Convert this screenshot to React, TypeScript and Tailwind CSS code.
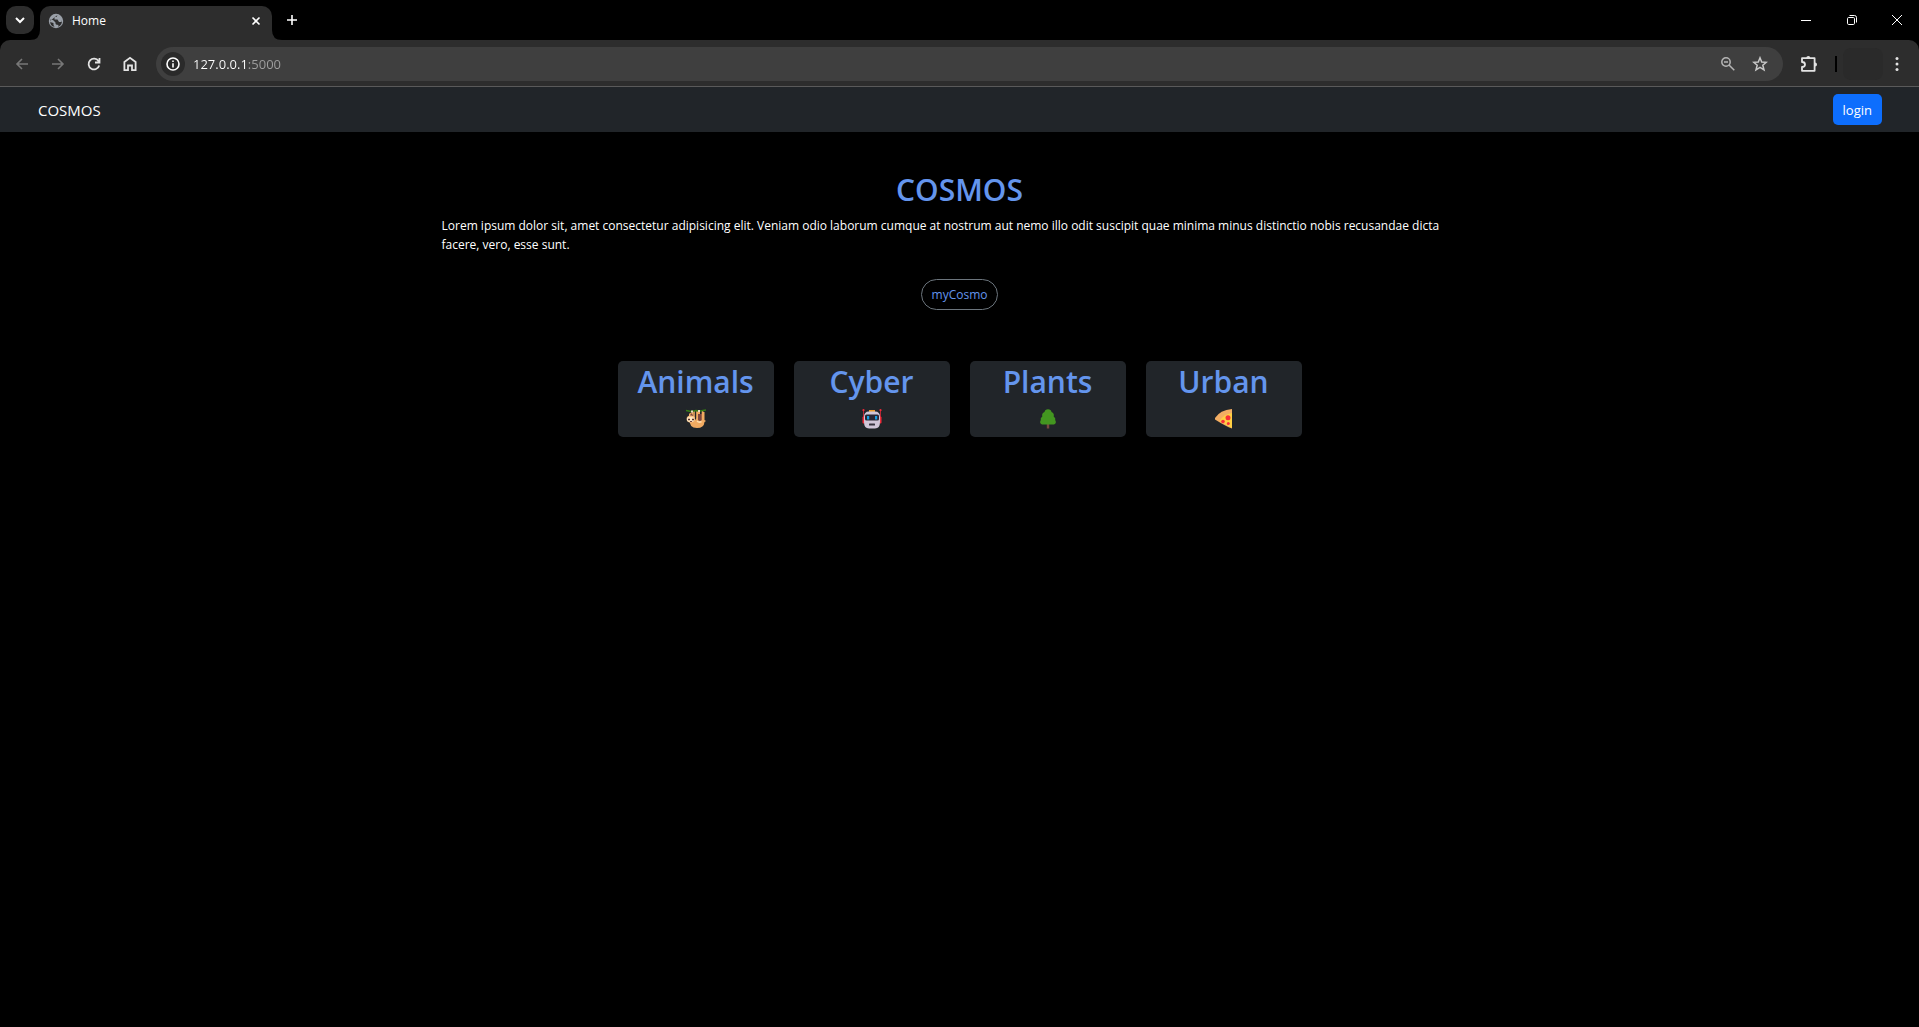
import React from "react";

function Sloth() {
  return (
    <svg viewBox="0 0 20 20" className="size-5" aria-hidden="true">
      <path d="M3 5V9Q3 19 11 19Q18 19 18.500 13L20 12L18.500 11V3H16V11H14V3H11V9L9 11L7 8V3L4 4Z" fill="#f2ab62" />
      <path d="M5 4Q8 6 9 10L7 8L4 7ZM12 5H16V11Q14 13 12 11Z" fill="#7b463e" />
      <path d="M8 2V9M11 2V11M16.500 2V12" stroke="#f2ab62" strokeWidth="1.600" />
      <ellipse cx="4.800" cy="10" rx="4.200" ry="3.600" fill="#f7c287" />
      <ellipse cx="4.600" cy="10.500" rx="3.600" ry="2.400" fill="#ffe8c4" />
      <path d="M2 10.500H4M6 10.500H8" stroke="#553028" strokeWidth="1.600" />
      <path d="M4 12.500H6" stroke="#7b463e" />
      <path d="M11 12Q13 14 15.500 12.500" stroke="#ffdfae" strokeWidth="1.500" fill="none" />
      <path d="M0 1.500L5 2.500L10 1.500L14 2L20 1" stroke="#367d16" strokeWidth="1.600" fill="none" />
      <path d="M5 2.500H7M12 2H14" stroke="#e8d9c1" strokeWidth="2" />
    </svg>
  );
}

function Robot() {
  return (
    <svg viewBox="0 0 20 20" className="size-5" aria-hidden="true">
      <path d="M1.500 1V13M18.500 1V13" stroke="#b52936" />
      <circle cx="1.500" cy="1.200" r="1.100" fill="#ef2938" />
      <circle cx="18.500" cy="1.200" r="1.100" fill="#ef2938" />
      <rect x="0.500" y="7.500" width="3" height="7" rx="1" fill="#f12c3b" />
      <rect x="16.500" y="7.500" width="3" height="7" rx="1" fill="#f12c3b" />
      <path d="M7 1H13V4H7Z" fill="#e99c2b" />
      <path d="M2 8Q2 2.500 7 2.500H13Q18 2.500 18 8V13Q18 19.500 13 19.500H7Q2 19.500 2 13Z" fill="#cfc5d7" />
      <rect x="3" y="5.500" width="14" height="6" rx="1.500" fill="#282632" />
      <rect x="5" y="7" width="2.200" height="3.500" fill="#159ee1" />
      <rect x="13" y="7" width="2.200" height="3.500" fill="#159ee1" />
      <rect x="7" y="14.500" width="6" height="2" rx="0.500" fill="#36323e" />
    </svg>
  );
}

function Tree() {
  return (
    <svg viewBox="0 0 20 20" className="size-5" aria-hidden="true">
      <rect x="8.800" y="13" width="2.400" height="6.500" fill="#77483e" />
      <path d="M10 0.300Q7 0.300 6.500 3Q3.500 4 4.300 7.500Q2 9 2.800 11Q1 14 4 15.500H16Q19 14 17.200 11Q18 9 15.700 7.500Q16.500 4 13.500 3Q13 0.300 10 0.300Z" fill="#439620" />
    </svg>
  );
}

function Pizza() {
  return (
    <svg viewBox="0 0 20 20" className="size-5" aria-hidden="true">
      <path d="M1 9Q6 1 18 0V19.500Q12 17.500 1 10.500Z" fill="#f3ad63" />
      <path d="M18 4Q10 5 5.500 12L18 19Z" fill="#ffd043" />
      <circle cx="14" cy="8.700" r="2.500" fill="#f92f38" />
      <circle cx="9" cy="12.500" r="1.800" fill="#f92f38" />
      <circle cx="14.300" cy="14.500" r="1.500" fill="#f92f38" />
    </svg>
  );
}

const categories = [
  { name: "Animals", Icon: Sloth },
  { name: "Cyber", Icon: Robot },
  { name: "Plants", Icon: Tree },
  { name: "Urban", Icon: Pizza },
];

function TabStrip() {
  return (
    <div className="flex h-10 items-stretch bg-black pl-1.5 text-white">
      <button aria-label="Search tabs" className="mt-1.5 flex size-7 items-center justify-center rounded-[10px] bg-[#2d2d2d]">
        <svg viewBox="0 0 10 10" className="size-2.5" fill="none" stroke="currentColor" strokeWidth="2">
          <path d="M1 3L5 7L9 3" />
        </svg>
      </button>
      <div className="flex items-end">
        <svg viewBox="0 0 10 10" className="-ml-1 size-2.5" fill="#2d2d2d" aria-hidden="true">
          <path d="M10 0V10H0Q10 10 10 0Z" />
        </svg>
        <div className="flex h-[34px] w-58 items-center rounded-t-[10px] bg-[#2d2d2d] pr-2 pb-1 pl-2">
          <svg viewBox="0 0 16 16" className="size-4" aria-hidden="true">
            <circle cx="8" cy="8" r="7.200" fill="#9aa0a8" />
            <path d="M9.500 2L8.500 4H6.500V6.500H9.500L11 9H13.500L14 7Q14.500 12 10 13.800L10.500 12Q7 12 7.500 9.500L5 7L2.500 6.500L2 9L5.500 10V12L6.500 13.800Q2 13 2 8" fill="#2d2d2d" />
          </svg>
          <span className="ml-2 flex-1 text-[12px] leading-4">Home</span>
          <button aria-label="Close tab" className="flex size-4 items-center justify-center">
            <svg viewBox="0 0 10 10" className="size-2.5" fill="none" stroke="currentColor" strokeWidth="1.600">
              <path d="M1.500 1.500L8.500 8.500M8.500 1.500L1.500 8.500" />
            </svg>
          </button>
        </div>
        <svg viewBox="0 0 10 10" className="size-2.5" fill="#2d2d2d" aria-hidden="true">
          <path d="M0 0V10H10Q0 10 0 0Z" />
        </svg>
      </div>
      <button aria-label="New tab" className="flex size-10 items-center pl-1">
        <svg viewBox="0 0 12 12" className="size-3" fill="none" stroke="currentColor" strokeWidth="1.600">
          <path d="M6 1V11M1 6H11" />
        </svg>
      </button>
      <div className="ml-auto flex">
        <button aria-label="Minimize" className="flex w-[46px] items-center justify-center">
          <svg viewBox="0 0 10 10" className="size-2.5" stroke="currentColor"><path d="M0 5.500H10" /></svg>
        </button>
        <button aria-label="Restore" className="flex w-[46px] items-center justify-center">
          <svg viewBox="0 0 10 10" className="size-2.5" fill="none" stroke="currentColor">
            <rect x="0.500" y="2.500" width="7" height="7" rx="1.200" />
            <path d="M2.500 0.500H7.500Q9.500 0.500 9.500 2.500V7.500" />
          </svg>
        </button>
        <button aria-label="Close" className="flex w-11 items-center justify-center">
          <svg viewBox="0 0 10 10" className="size-2.5" fill="none" stroke="currentColor"><path d="M0 0L10 10M10 0L0 10" /></svg>
        </button>
      </div>
    </div>
  );
}

function Toolbar() {
  return (
    <div className="bg-black">
      <div className="flex h-[47px] items-center rounded-t-[10px] bg-[#2d2d2d] pr-3 pl-3 text-[#e3e3e3]">
        <div className="flex gap-4">
          <button aria-label="Back" className="flex size-5 items-center justify-center text-[#777777]">
            <svg viewBox="0 0 14 14" className="size-3.5" fill="none" stroke="currentColor" strokeWidth="1.600"><path d="M13 7H2M7 2L2 7L7 12" /></svg>
          </button>
          <button aria-label="Forward" className="flex size-5 items-center justify-center text-[#777777]">
            <svg viewBox="0 0 14 14" className="size-3.5" fill="none" stroke="currentColor" strokeWidth="1.600"><path d="M1 7H12M7 2L12 7L7 12" /></svg>
          </button>
          <button aria-label="Reload" className="flex size-5 items-center justify-center">
            <svg viewBox="0 0 14 14" className="size-3.5" fill="none" stroke="currentColor" strokeWidth="1.800"><path d="M12.200 8.500A5.400 5.400 0 1 1 11.500 4L12.300 5.500M12.500 1V5.500H8" /></svg>
          </button>
          <button aria-label="Home" className="flex size-5 items-center justify-center">
            <svg viewBox="0 0 14 16" className="h-4 w-3.5" fill="none" stroke="currentColor" strokeWidth="1.800"><path d="M1.400 6L7 1.800L12.600 6V14.200H9V9.500H5V14.200H1.400Z" /></svg>
          </button>
        </div>
        <form className="ml-4 flex h-[34px] flex-1 items-center rounded-full bg-[#3f3f3f] px-[5px]" onSubmit={(e) => e.preventDefault()}>
          <button type="button" aria-label="Site information" className="flex size-6 items-center justify-center rounded-full bg-[#2a2a2a] text-white">
            <svg viewBox="0 0 14 14" className="size-3.5" fill="none" stroke="currentColor" strokeWidth="1.600"><circle cx="7" cy="7" r="6" /><path d="M7 6.200V10.500M7 3.500V5.100" /></svg>
          </button>
          <label className="ml-2 flex h-5 flex-1 items-center text-[13px] leading-5">
            <input aria-label="Address" defaultValue="127.0.0.1:5000" className="w-full bg-transparent bg-[linear-gradient(90deg,#ffffff_54px,#a0a0a0_54px)] bg-clip-text text-transparent outline-none" />
          </label>
          <button type="button" aria-label="Zoom" className="flex size-5 items-center justify-center text-[#b5b5b5]">
            <svg viewBox="0 0 14 14" className="size-3.5" fill="none" stroke="currentColor" strokeWidth="1.500"><circle cx="5" cy="5" r="4.200" /><path d="M8 8L13.300 13.300M3 5H7" /></svg>
          </button>
          <button type="button" aria-label="Bookmark this page" className="mr-2 ml-3 flex size-5 items-center justify-center text-[#c7c7c7]">
            <svg viewBox="0 0 16 16" className="size-4" fill="none" stroke="currentColor" strokeWidth="1.500"><path d="M8 1.800L9.700 6L14.300 6.300L10.800 9.200L12 13.800L8 11.300L4 13.800L5.200 9.200L1.700 6.300L6.300 6Z" /></svg>
          </button>
        </form>
        <button aria-label="Extensions" className="ml-4 flex size-5 items-center justify-center">
          <svg viewBox="0 0 18 18" className="size-[18px]" fill="none" stroke="currentColor" strokeWidth="1.800">
            <path d="M2 3.200H14.600V15.800H2V12C6 12 6 7 2 7Z" strokeLinejoin="round" />
            <path d="M6.300 3A2 2 0 0 1 10.300 3ZM15 7.500A2 2 0 0 1 15 11.500Z" fill="currentColor" stroke="none" />
          </svg>
        </button>
        <div className="ml-4 h-4 w-0.5 bg-black" />
        <div className="ml-1.5 h-8 w-10 rounded-lg bg-[#2a2a2a]" />
        <button aria-label="Browser menu" className="ml-1 flex size-5 items-center justify-center">
          <svg viewBox="0 0 4 14" className="h-3.5 w-1" fill="currentColor"><circle cx="2" cy="1.600" r="1.500" /><circle cx="2" cy="7" r="1.500" /><circle cx="2" cy="12.400" r="1.500" /></svg>
        </button>
      </div>
    </div>
  );
}

export default function App() {
  return (
    <div className='min-h-screen bg-black font-["Open_Sans","Noto_Sans",sans-serif] text-white'>
      <TabStrip />
      <Toolbar />
      <nav className="-mt-px flex h-[46px] items-center justify-between border-t border-[#5a5a5a] bg-[#212529] pr-[37px] pl-[38px]">
        <a href="#" className="text-[15px] leading-6">COSMOS</a>
        <button className="flex h-[31px] items-center rounded-[5px] bg-[#0d6efd] px-2.5 text-[13px] leading-5">login</button>
      </nav>
      <main className="pt-[39px]">
        <section className="mx-auto flex max-w-[1056px] flex-col items-center px-2.5">
          <h1 className="text-[30px] leading-[38px] font-semibold text-[#6495ed]">COSMOS</h1>
          <p className="mt-[7px] w-full pr-4 text-[12px] leading-[19px]">
            Lorem ipsum dolor sit, amet consectetur adipisicing elit. Veniam odio laborum cumque at nostrum aut nemo illo odit suscipit quae minima minus distinctio nobis recusandae dicta facere, vero, esse sunt.
          </p>
          <button className="mt-[25px] flex h-[31px] items-center rounded-full border border-[#6c757d] px-2.5 text-[12px] leading-5 text-[#6495ed]">myCosmo</button>
        </section>
        <section className="mt-[51px] flex flex-wrap justify-center gap-5">
          {categories.map(({ name, Icon }) => (
            <a key={name} href="#" className="flex h-[76px] w-39 flex-col items-center rounded-[5px] bg-[#212529] pt-0.5">
              <h2 className="text-[30px] leading-[38px] font-semibold text-[#6495ed]">{name}</h2>
              <span className="mt-2"><Icon /></span>
            </a>
          ))}
        </section>
      </main>
    </div>
  );
}
